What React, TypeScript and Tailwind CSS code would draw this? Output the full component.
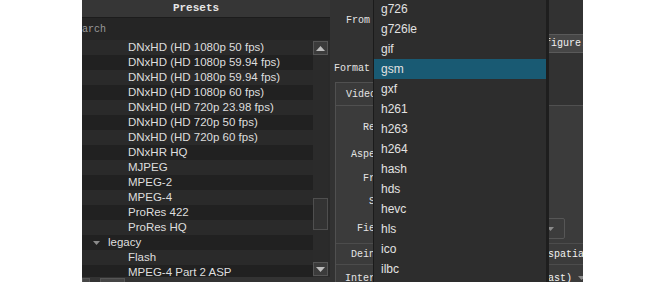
import React from "react";

const presets = [
  "DNxHD (HD 1080p 50 fps)",
  "DNxHD (HD 1080p 59.94 fps)",
  "DNxHD (HD 1080p 59.94 fps)",
  "DNxHD (HD 1080p 60 fps)",
  "DNxHD (HD 720p 23.98 fps)",
  "DNxHD (HD 720p 50 fps)",
  "DNxHD (HD 720p 60 fps)",
  "DNxHR HQ",
  "MJPEG",
  "MPEG-2",
  "MPEG-4",
  "ProRes 422",
  "ProRes HQ",
  "legacy",
  "Flash",
  "MPEG-4 Part 2 ASP",
];

const formats = [
  "g726",
  "g726le",
  "gif",
  "gsm",
  "gxf",
  "h261",
  "h263",
  "h264",
  "hash",
  "hds",
  "hevc",
  "hls",
  "ico",
  "ilbc",
  "image2",
];

const mono = { fontFamily: '"Liberation Mono", "DejaVu Sans Mono", monospace' };
const sans = { fontFamily: '"Liberation Sans", Arial, sans-serif' };

function Arrow({ up }: { up?: boolean }) {
  return (
    <svg width="9" height="5" viewBox="0 0 9 5">
      {up ? (
        <path d="M0 5 L4.5 0 L9 5 Z" fill="#bdbdbd" />
      ) : (
        <path d="M0 0 L4.5 5 L9 0 Z" fill="#bdbdbd" />
      )}
    </svg>
  );
}

function SmallDown() {
  return (
    <svg width="7" height="4" viewBox="0 0 7 4">
      <path d="M0 0 L3.5 4 L7 0 Z" fill="#8a8a8a" />
    </svg>
  );
}

export default function App() {
  return (
    <div className="w-[664px] h-[282px] bg-white flex overflow-hidden">
      <div className="w-[82px] shrink-0" />
      <div className="w-[501px] h-[282px] shrink-0 relative overflow-hidden flex bg-[#333333]">
        {/* Presets panel (cropped on the left) */}
        <div className="w-[268px] -ml-[20px] shrink-0 flex flex-col h-[290px]">
          <div
            className="h-[17px] shrink-0 bg-[#363636] flex items-center justify-center text-[11px] font-bold text-[#e6e6e6]"
            style={mono}
          >
            Presets
          </div>
          <div
            className="h-[23px] shrink-0 bg-[#252525] border-t border-[#1c1c1c] flex items-center pl-[8px] text-[10px] text-[#9a9a9a]"
            style={mono}
          >
            Search
          </div>
          <div className="h-[237px] shrink-0 flex overflow-hidden">
            <div className="flex-1 flex flex-col" style={sans}>
              {presets.map((p, i) => (
                <div
                  key={i}
                  className={`h-[15px] shrink-0 flex items-center text-[11.5px] leading-none text-[#dedede] ${
                    i % 2 === 0 ? "bg-[#2a2a2a]" : "bg-[#212121]"
                  }`}
                >
                  {p === "legacy" ? (
                    <div className="flex items-center">
                      <div className="w-[31px]" />
                      <SmallDown />
                      <span className="ml-[8px]">legacy</span>
                    </div>
                  ) : (
                    <span className="pl-[66px]">{p}</span>
                  )}
                </div>
              ))}
            </div>
            <div className="w-[15px] bg-[#2b2b2b] flex flex-col pt-[1px] pb-[1px]">
              <div className="h-[14px] shrink-0 bg-[#3b3b3b] border border-[#555555] flex items-center justify-center">
                <Arrow up />
              </div>
              <div className="h-[143px] shrink-0" />
              <div className="h-[32px] shrink-0 bg-[#333333] border border-[#4f4f4f]" />
              <div className="flex-1" />
              <div className="h-[14px] shrink-0 bg-[#3b3b3b] border border-[#555555] flex items-center justify-center">
                <Arrow />
              </div>
            </div>
            <div className="w-[2px] bg-[#2a2a2a]" />
          </div>
          <div className="h-[13px] shrink-0 bg-[#333333] flex gap-[10px] pl-[20px] pt-[1px]">
            <div className="w-[8px] h-[10px] bg-[#454545] border border-[#555555]" />
            <div className="w-[25px] h-[10px] bg-[#454545] border border-[#555555]" />
          </div>
        </div>

        {/* Right panel */}
        <div
          className="flex-1 h-[282px] flex flex-col text-[10px] text-[#e4e4e4] bg-[#323232]"
          style={mono}
        >
          <div className="h-[11px] shrink-0" />
          <div className="h-[19px] shrink-0 flex items-center">
            <div className="w-[40px] text-right">From</div>
          </div>
          <div className="h-[4px] shrink-0" />
          <div className="h-[19px] shrink-0 flex">
            <div className="w-[195px] shrink-0" />
            <div className="w-[100px] shrink-0 h-[19px] bg-[#464646] border border-[#5a5a5a] flex items-center pl-[1px] text-[#f0f0f0]">
              Configure...
            </div>
          </div>
          <div className="h-[5px] shrink-0" />
          <div className="h-[20px] shrink-0 flex items-center">
            <div className="w-[40px] text-right">Format</div>
          </div>
          <div className="h-[4px] shrink-0" />
          <div className="h-[23px] shrink-0 flex pl-[5px]">
            <div className="w-[52px] h-[23px] bg-[#3a3a3a] border border-b-0 border-[#505050] flex items-center pl-[10px]">
              Video
            </div>
          </div>
          <div className="flex-1 min-h-0 ml-[5px] bg-[#3b3b3b] border-t border-l border-[#505050] flex flex-col overflow-hidden">
            <div className="h-[11px] shrink-0" />
            <div className="h-[20px] shrink-0 flex items-center">
              <div className="w-[87px] text-right">Resolution</div>
            </div>
            <div className="h-[7px] shrink-0" />
            <div className="h-[20px] shrink-0 flex items-center">
              <div className="w-[87px] text-right">Aspect ratio</div>
            </div>
            <div className="h-[4px] shrink-0" />
            <div className="h-[20px] shrink-0 flex items-center">
              <div className="w-[87px] text-right">Frames/sec</div>
            </div>
            <div className="h-[3px] shrink-0" />
            <div className="h-[20px] shrink-0 flex items-center">
              <div className="w-[87px] text-right">Scan mode</div>
            </div>
            <div className="h-[7px] shrink-0" />
            <div className="h-[21px] shrink-0 flex items-center">
              <div className="w-[87px] text-right">Field order</div>
              <div className="ml-[5px] w-[137px] h-[21px] bg-[#3c3c3c] border border-[#565656] rounded-[2px] flex items-center pl-[6px]">
                <span className="flex-1">Top Field First</span>
                <div className="w-[17px] flex items-center">
                  <SmallDown />
                </div>
              </div>
            </div>
            <div className="h-[4px] shrink-0" />
            <div className="h-[22px] shrink-0 flex items-center border-y border-[#4c4c4c]">
              <div className="w-[87px] text-right">Deinterlacer</div>
              <div className="ml-[5px] pl-[6px] whitespace-nowrap text-[#f2f2f2]">
                YADIF - temporal + spatial (best)
              </div>
            </div>
            <div className="h-[3px] shrink-0" />
            <div className="h-[20px] shrink-0 flex items-center">
              <div className="w-[87px] text-right">Interpolation</div>
              <div className="ml-[5px] w-[160px] h-[20px] flex items-center pl-[6px] whitespace-nowrap text-[#f2f2f2]">
                <span>Nearest Neighbor (fast)</span>
                <div className="ml-[6px] flex items-center">
                  <SmallDown />
                </div>
              </div>
            </div>
          </div>
        </div>

        {/* Format dropdown popup */}
        <div
          className="absolute left-[291px] top-[-1px] w-[176px] h-[300px] bg-[#2d2d2d] border-l border-[#1b1b1b] border-r-[3px] border-r-[#1e1e1e] flex flex-col"
          style={sans}
        >
          {formats.map((f) => (
            <div
              key={f}
              className={`h-[20px] shrink-0 flex items-center pl-[7px] text-[12px] text-[#e2e2e2] ${
                f === "gsm" ? "bg-[#195a73]" : ""
              }`}
            >
              {f}
            </div>
          ))}
        </div>
      </div>
      <div className="flex-1" />
    </div>
  );
}
